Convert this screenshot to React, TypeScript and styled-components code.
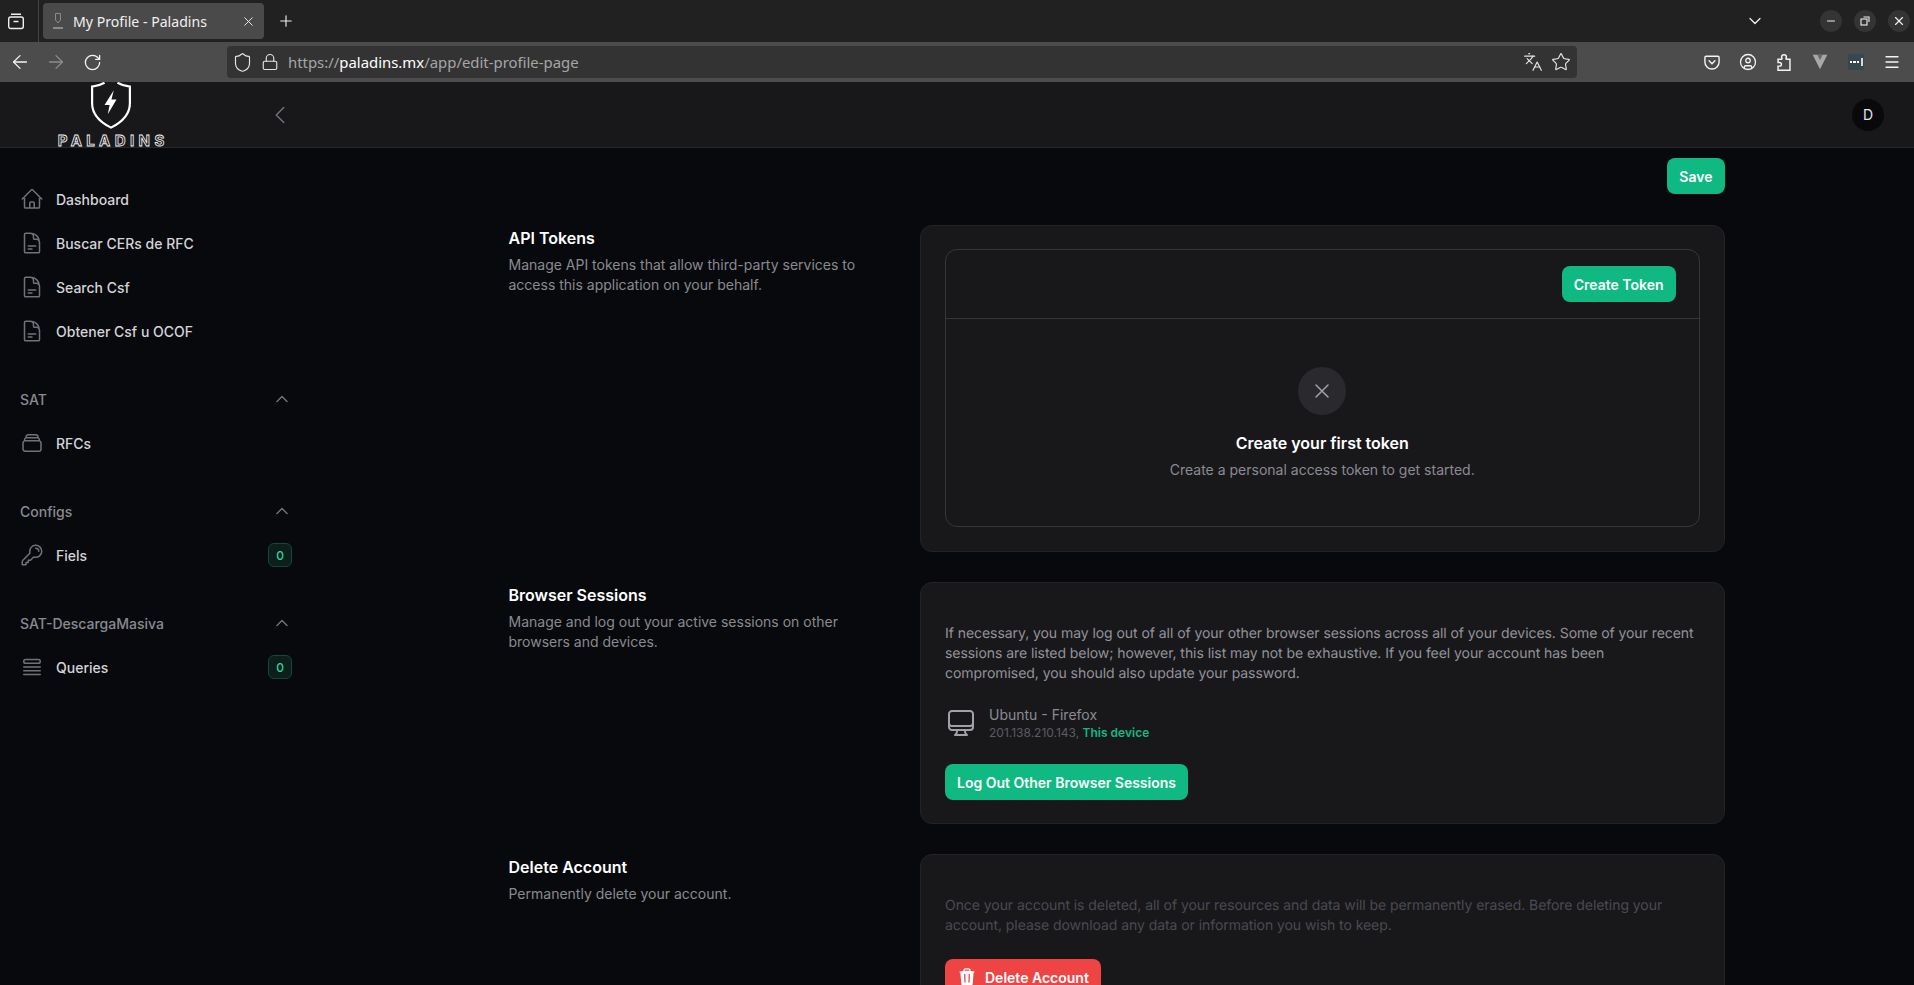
import styled, { createGlobalStyle } from 'styled-components';
import {
  ArrowLeft,
  ArrowRight,
  ChevronDown,
  CircleUser,
  Languages,
  Lock,
  Menu,
  Minus,
  Plus,
  RotateCw,
  Shield,
  Star,
  X,
} from 'lucide-react';
import {
  HiOutlineChevronLeft,
  HiOutlineChevronUp,
  HiOutlineComputerDesktop,
  HiOutlineDocumentText,
  HiOutlineHome,
  HiOutlineKey,
  HiOutlineQueueList,
  HiOutlineRectangleStack,
  HiOutlineXMark,
  HiTrash,
} from 'react-icons/hi2';

const GlobalStyle = createGlobalStyle`
  html, body {
    margin: 0;
    height: 100%;
    overflow: hidden;
    background: #09090b;
  }
  * { box-sizing: border-box; }
`;

const Page = styled.div`
  height: 985px;
  display: flex;
  flex-direction: column;
  overflow: hidden;
  font-family: Inter, 'Liberation Sans', sans-serif;
  color: #fff;
  background: #08090c;
`;

/* browser chrome */
const TabBar = styled.div`
  height: 42px;
  flex: none;
  display: flex;
  align-items: center;
  background: #212121;
  color: #f0f0f0;
  font-family: 'Noto Sans', sans-serif;
`;

const TabsButton = styled.div`
  width: 39px;
  height: 42px;
  padding-left: 7px;
  display: flex;
  align-items: center;
  border-right: 1px solid #444;
`;

const Tab = styled.div`
  width: 221px;
  height: 36px;
  margin-left: 4px;
  padding: 0 8px 0 9px;
  display: flex;
  align-items: center;
  background: #4a4a4a;
  border-radius: 4px;
  font-size: 14.1px;
`;

const TabTitle = styled.span`
  flex: 1;
  margin-left: 9px;
  white-space: nowrap;
`;

const NewTab = styled.div`
  width: 44px;
  display: flex;
  justify-content: center;
`;

const TabBarEnd = styled.div`
  margin-left: auto;
  display: flex;
  align-items: center;
  padding-right: 4px;
`;

const TabList = styled.div`
  margin-right: 43px;
  display: flex;
`;

const WindowButton = styled.div`
  width: 22px;
  height: 22px;
  margin-left: 12px;
  border-radius: 50%;
  background: #343434;
  display: flex;
  align-items: center;
  justify-content: center;
`;

const Toolbar = styled.div`
  height: 40px;
  flex: none;
  display: flex;
  align-items: center;
  background: #4c4c4c;
  color: #f4f4f4;
  font-family: 'Noto Sans', sans-serif;
`;

const NavButtons = styled.div`
  width: 227px;
  padding-left: 8px;
  display: flex;
  gap: 12px;
`;

const IconSlot = styled.span`
  width: 24px;
  height: 24px;
  display: flex;
  align-items: center;
  justify-content: center;
`;

const UrlBar = styled.div`
  width: 1350px;
  height: 32px;
  padding: 0 6px 0 5px;
  display: flex;
  align-items: center;
  gap: 8px;
  background: #333;
  border-radius: 4px;
  font-size: 14.9px;
  color: #a6a6a6;
`;

const UrlText = styled.div`
  flex: 1;
  white-space: nowrap;
  margin-left: 1px;
`;

const UrlHost = styled.span`
  color: #fff;
`;

const UrlActions = styled.div`
  display: flex;
  gap: 8px;
  color: #e6e6e6;
`;

const ToolbarIcons = styled.div`
  margin-left: 123px;
  display: flex;
  align-items: center;
  gap: 12px;
`;

const ExtensionDots = styled.div`
  width: 16px;
  height: 16px;
  background: #37474f;
  border-radius: 2px;
  display: flex;
  align-items: center;
  justify-content: center;
  gap: 1px;
`;

const ExtensionDot = styled.i`
  width: 2.5px;
  height: 2.5px;
  background: #fff;
`;

const ExtensionBar = styled.i`
  width: 1.5px;
  height: 8px;
  margin-left: 1px;
  background: #d8d8d8;
`;

/* app header */
const AppHeader = styled.header`
  height: 66px;
  flex: none;
  display: flex;
  align-items: center;
  padding-right: 30px;
  background: #18181b;
  border-bottom: 1px solid #27272a;
`;

const LogoBox = styled.div`
  width: 222px;
  height: 65px;
  display: flex;
  flex-direction: column;
  align-items: center;
  color: #fff;
`;

const LogoWord = styled.span`
  margin-top: 6px;
  padding-left: 4.4px;
  height: 12px;
  line-height: 12px;
  font-size: 15px;
  font-weight: 700;
  letter-spacing: 4.4px;
  color: transparent;
  -webkit-text-stroke: 0.8px #f4f4f4;
  white-space: nowrap;
  position: relative;
  z-index: 2;
`;

const CollapseButton = styled.div`
  width: 116px;
  color: #71717a;
  display: flex;
  padding-left: 46px;
`;

const Avatar = styled.div`
  margin-left: auto;
  width: 32px;
  height: 32px;
  border-radius: 50%;
  background: #09090b;
  font-size: 14px;
  color: #e4e4e7;
  display: flex;
  align-items: center;
  justify-content: center;
`;

/* body */
const Body = styled.div`
  flex: 1;
  min-height: 0;
  display: flex;
`;

const Sidebar = styled.nav`
  width: 320px;
  flex: none;
  padding-top: 29px;
  display: flex;
  flex-direction: column;
  gap: 24px;
`;

const NavGroup = styled.div`
  display: flex;
  flex-direction: column;
`;

const NavGroupHeader = styled.div`
  height: 44px;
  width: 292px;
  padding-left: 20px;
  display: flex;
  align-items: center;
  justify-content: space-between;
  font-size: 14px;
  font-weight: 500;
  color: #8a8a91;
`;

const GroupChevron = styled.span`
  display: flex;
  width: 24px;
  justify-content: center;
  margin-right: -2px;
  color: #71717a;
`;

const NavItem = styled.div`
  height: 44px;
  width: 292px;
  padding-left: 20px;
  display: flex;
  align-items: center;
  gap: 12px;
  font-size: 14px;
  font-weight: 500;
  color: #d4d4d8;
`;

const NavIcon = styled.span`
  display: flex;
  color: #71717a;
`;

const NavBadge = styled.span`
  margin-left: auto;
  width: 24px;
  height: 24px;
  border-radius: 6px;
  border: 1px solid #124a38;
  background: #0c1f1b;
  color: #34d399;
  font-size: 12px;
  font-weight: 500;
  display: flex;
  align-items: center;
  justify-content: center;
`;

const Main = styled.main`
  flex: 1;
  min-width: 0;
  padding-right: 1px;
  display: flex;
  justify-content: center;
`;

const Content = styled.div`
  width: 1216px;
  padding-top: 10px;
`;

const ActionRow = styled.div`
  display: flex;
  justify-content: flex-end;
  margin-bottom: 31px;
`;

const Button = styled.button<{ $tone?: 'green' | 'red' }>`
  height: 36px;
  padding: 0 12px;
  display: inline-flex;
  align-items: center;
  gap: 8px;
  border: 0;
  border-radius: 8px;
  background: ${({ $tone }) => ($tone === 'red' ? '#ef4444' : '#10b981')};
  color: #fff;
  font-family: inherit;
  font-size: 14px;
  font-weight: 600;
`;

const Sections = styled.div`
  display: flex;
  flex-direction: column;
  gap: 30px;
`;

const Section = styled.section`
  display: grid;
  grid-template-columns: 389px 1fr;
  column-gap: 22.5px;
`;

const SectionInfo = styled.div`
  padding-top: 1px;
`;

const SectionTitle = styled.h3`
  margin: 0;
  font-size: 16px;
  line-height: 24px;
  font-weight: 600;
  color: #fff;
`;

const SectionText = styled.p`
  margin: 5px 0 0;
  font-size: 14px;
  line-height: 20px;
  color: #8a8a91;
`;

const Card = styled.div<{ $tight?: boolean }>`
  padding: ${({ $tight }) => ($tight ? '23px 24px 24px' : '41px 24px 23px')};
  background: #18181b;
  border: 1px solid #232326;
  border-radius: 12px;
`;

const TokenBox = styled.div`
  height: 278px;
  border: 1px solid #36363b;
  border-radius: 12px;
`;

const TokenHeader = styled.div`
  height: 69px;
  padding-right: 23px;
  display: flex;
  align-items: center;
  justify-content: flex-end;
  border-bottom: 1px solid #36363b;
`;

const EmptyState = styled.div`
  padding-top: 48px;
  display: flex;
  flex-direction: column;
  align-items: center;
`;

const EmptyIcon = styled.div`
  width: 48px;
  height: 48px;
  border-radius: 50%;
  background: #2a2a2e;
  color: #a1a1aa;
  display: flex;
  align-items: center;
  justify-content: center;
`;

const EmptyTitle = styled.div`
  margin-top: 16px;
  font-size: 16px;
  line-height: 24px;
  font-weight: 600;
  color: #fff;
`;

const EmptyText = styled.div`
  margin-top: 5px;
  font-size: 14px;
  line-height: 20px;
  color: #8b8b92;
`;

const CardText = styled.p<{ $dim?: boolean }>`
  margin: 0;
  font-size: 14px;
  letter-spacing: -0.06px;
  text-rendering: geometricPrecision;
  line-height: 20px;
  color: ${({ $dim }) => ($dim ? '#4a4a52' : '#93939a')};
`;

const Device = styled.div`
  margin-top: 21px;
  display: flex;
  align-items: center;
  gap: 12px;
`;

const DeviceIcon = styled.span`
  display: flex;
  color: #a1a1aa;
`;

const DeviceName = styled.div`
  font-size: 14px;
  line-height: 20px;
  color: #8b8b92;
`;

const DeviceMeta = styled.div`
  font-size: 12px;
  line-height: 16px;
  color: #5c5c63;
`;

const ThisDevice = styled.span`
  color: #10b981;
  font-weight: 600;
`;

const CardAction = styled.div`
  margin-top: 23px;
`;

const ShieldLogo = () => (
  <svg width="44" height="51" viewBox="0 0 44 51" fill="none">
    <path
      d="M15 0.8C11 3 6 4.6 1.5 5V23C1.5 35 11 44 22 49.5C33 44 42.5 35 42.5 23V5C38 4.6 33 3 29 0.8"
      stroke="currentColor"
      strokeWidth="2.4"
    />
    <polygon points="25,9 15,25 20.5,25 18.5,35 28,19 22.5,19" fill="currentColor" />
  </svg>
);

const Favicon = () => (
  <svg width="12" height="18" viewBox="0 0 12 18" fill="none" stroke="#8a8a8a">
    <path d="M3.5 1.5h5V8L6 11 3.5 8z" />
    <path d="M1 16h10" strokeWidth="2" />
  </svg>
);

const TabsIcon = () => (
  <svg width="18" height="18" viewBox="0 0 18 18" fill="none" stroke="#f0f0f0" strokeWidth="1.4">
    <rect x="1.7" y="5" width="14.6" height="11.5" rx="2" />
    <path d="M4 2.3h10M6.5 9.5h5" />
  </svg>
);

const RestoreIcon = () => (
  <svg width="10" height="10" viewBox="0 0 10 10" fill="none" stroke="#f0f0f0" strokeWidth="1.1">
    <rect x="1" y="3" width="6" height="6" />
    <path d="M3.5 1h5.5v5" />
  </svg>
);

const PocketIcon = () => (
  <svg width="20" height="20" viewBox="0 0 24 24" fill="none" stroke="#f4f4f4" strokeWidth="1.7">
    <path d="M5 5h14a1.5 1.5 0 0 1 1.5 1.5V12a8.5 8.5 0 0 1-17 0V6.5A1.5 1.5 0 0 1 5 5z" />
    <path d="M8.5 10.5 12 14l3.500-3.500" strokeLinecap="round" />
  </svg>
);

const PuzzleIcon = () => (
  <svg width="22" height="22" viewBox="0 0 24 24" fill="none" stroke="#f4f4f4" strokeWidth="1.6">
    <path d="M5.5 9h3.800c.8 0 .5-1 .2-1.800C9 5.500 10.300 4 12 4s3 1.500 2.500 3.200c-.3.800-.6 1.800.2 1.800h3.800v12h-13v-4.500h1.700a2 2 0 0 0 0-4H5.500z" />
  </svg>
);

const VueIcon = () => (
  <svg width="22" height="22" viewBox="0 0 24 24">
    <polygon points="4,4 20,4 12,20" fill="#a8a8a8" />
    <polygon points="9,4 15,4 12,10" fill="#6a6a6a" />
  </svg>
);

const mainNav = [
  { label: 'Dashboard', icon: <HiOutlineHome size={24} /> },
  { label: 'Buscar CERs de RFC', icon: <HiOutlineDocumentText size={24} /> },
  { label: 'Search Csf', icon: <HiOutlineDocumentText size={24} /> },
  { label: 'Obtener Csf u OCOF', icon: <HiOutlineDocumentText size={24} /> },
];

const navGroups = [
  { title: 'SAT', label: 'RFCs', icon: <HiOutlineRectangleStack size={24} /> },
  { title: 'Configs', label: 'Fiels', icon: <HiOutlineKey size={24} />, badge: 0 },
  { title: 'SAT-DescargaMasiva', label: 'Queries', icon: <HiOutlineQueueList size={24} />, badge: 0 },
];

const App: React.FC<{}> = () => (
  <Page>
    <GlobalStyle />

    <TabBar>
      <TabsButton>
        <TabsIcon />
      </TabsButton>
      <Tab>
        <Favicon />
        <TabTitle>My Profile - Paladins</TabTitle>
        <X size={15} strokeWidth={1.5} />
      </Tab>
      <NewTab>
        <Plus size={18} strokeWidth={1.5} />
      </NewTab>
      <TabBarEnd>
        <TabList>
          <ChevronDown size={20} strokeWidth={1.5} />
        </TabList>
        <WindowButton>
          <Minus size={12} />
        </WindowButton>
        <WindowButton>
          <RestoreIcon />
        </WindowButton>
        <WindowButton>
          <X size={14} />
        </WindowButton>
      </TabBarEnd>
    </TabBar>

    <Toolbar>
      <NavButtons>
        <IconSlot>
          <ArrowLeft size={22} strokeWidth={1.4} />
        </IconSlot>
        <IconSlot>
          <ArrowRight size={22} strokeWidth={1.4} color="#8c8c8c" />
        </IconSlot>
        <IconSlot>
          <RotateCw size={19} strokeWidth={1.6} />
        </IconSlot>
      </NavButtons>
      <UrlBar>
        <Shield size={21} color="#e6e6e6" strokeWidth={1.3} />
        <Lock size={18} color="#e6e6e6" strokeWidth={1.5} />
        <UrlText>
          https://<UrlHost>paladins.mx</UrlHost>/app/edit-profile-page
        </UrlText>
        <UrlActions>
          <Languages size={20} strokeWidth={1.4} />
          <Star size={20} strokeWidth={1.4} />
        </UrlActions>
      </UrlBar>
      <ToolbarIcons>
        <IconSlot>
          <PocketIcon />
        </IconSlot>
        <IconSlot>
          <CircleUser size={18} strokeWidth={1.7} />
        </IconSlot>
        <IconSlot>
          <PuzzleIcon />
        </IconSlot>
        <IconSlot>
          <VueIcon />
        </IconSlot>
        <IconSlot>
          <ExtensionDots>
            <ExtensionDot />
            <ExtensionDot />
            <ExtensionDot />
            <ExtensionBar />
          </ExtensionDots>
        </IconSlot>
        <IconSlot>
          <Menu size={18} strokeWidth={1.7} />
        </IconSlot>
      </ToolbarIcons>
    </Toolbar>

    <AppHeader>
      <LogoBox>
        <ShieldLogo />
        <LogoWord>PALADINS</LogoWord>
      </LogoBox>
      <CollapseButton>
        <HiOutlineChevronLeft size={24} />
      </CollapseButton>
      <Avatar>D</Avatar>
    </AppHeader>

    <Body>
      <Sidebar>
        <NavGroup>
          {mainNav.map((item) => (
            <NavItem key={item.label}>
              <NavIcon>{item.icon}</NavIcon>
              {item.label}
            </NavItem>
          ))}
        </NavGroup>

        {navGroups.map((group) => (
          <NavGroup key={group.title}>
            <NavGroupHeader>
              {group.title}
              <GroupChevron>
                <HiOutlineChevronUp size={16} strokeWidth={2.2} />
              </GroupChevron>
            </NavGroupHeader>
            <NavItem>
              <NavIcon>{group.icon}</NavIcon>
              {group.label}
              {group.badge !== undefined && <NavBadge>{group.badge}</NavBadge>}
            </NavItem>
          </NavGroup>
        ))}
      </Sidebar>

      <Main>
        <Content>
          <ActionRow>
            <Button>Save</Button>
          </ActionRow>

          <Sections>
            <Section>
              <SectionInfo>
                <SectionTitle>API Tokens</SectionTitle>
                <SectionText>
                  Manage API tokens that allow third-party services to
                  <br />
                  access this application on your behalf.
                </SectionText>
              </SectionInfo>
              <Card $tight>
                <TokenBox>
                  <TokenHeader>
                    <Button>Create Token</Button>
                  </TokenHeader>
                  <EmptyState>
                    <EmptyIcon>
                      <HiOutlineXMark size={24} />
                    </EmptyIcon>
                    <EmptyTitle>Create your first token</EmptyTitle>
                    <EmptyText>Create a personal access token to get started.</EmptyText>
                  </EmptyState>
                </TokenBox>
              </Card>
            </Section>

            <Section>
              <SectionInfo>
                <SectionTitle>Browser Sessions</SectionTitle>
                <SectionText>
                  Manage and log out your active sessions on other
                  <br />
                  browsers and devices.
                </SectionText>
              </SectionInfo>
              <Card>
                <CardText>
                  If necessary, you may log out of all of your other browser sessions across all of your devices. Some
                  of your recent sessions are listed below; however, this list may not be exhaustive. If you feel your
                  account has been compromised, you should also update your password.
                </CardText>
                <Device>
                  <DeviceIcon>
                    <HiOutlineComputerDesktop size={32} />
                  </DeviceIcon>
                  <div>
                    <DeviceName>Ubuntu - Firefox</DeviceName>
                    <DeviceMeta>
                      201.138.210.143, <ThisDevice>This device</ThisDevice>
                    </DeviceMeta>
                  </div>
                </Device>
                <CardAction>
                  <Button>Log Out Other Browser Sessions</Button>
                </CardAction>
              </Card>
            </Section>

            <Section>
              <SectionInfo>
                <SectionTitle>Delete Account</SectionTitle>
                <SectionText>Permanently delete your account.</SectionText>
              </SectionInfo>
              <Card>
                <CardText $dim>
                  Once your account is deleted, all of your resources and data will be permanently erased. Before
                  deleting your account, please download any data or information you wish to keep.
                </CardText>
                <CardAction>
                  <Button $tone="red">
                    <HiTrash size={20} />
                    Delete Account
                  </Button>
                </CardAction>
              </Card>
            </Section>
          </Sections>
        </Content>
      </Main>
    </Body>
  </Page>
);

export default App;
